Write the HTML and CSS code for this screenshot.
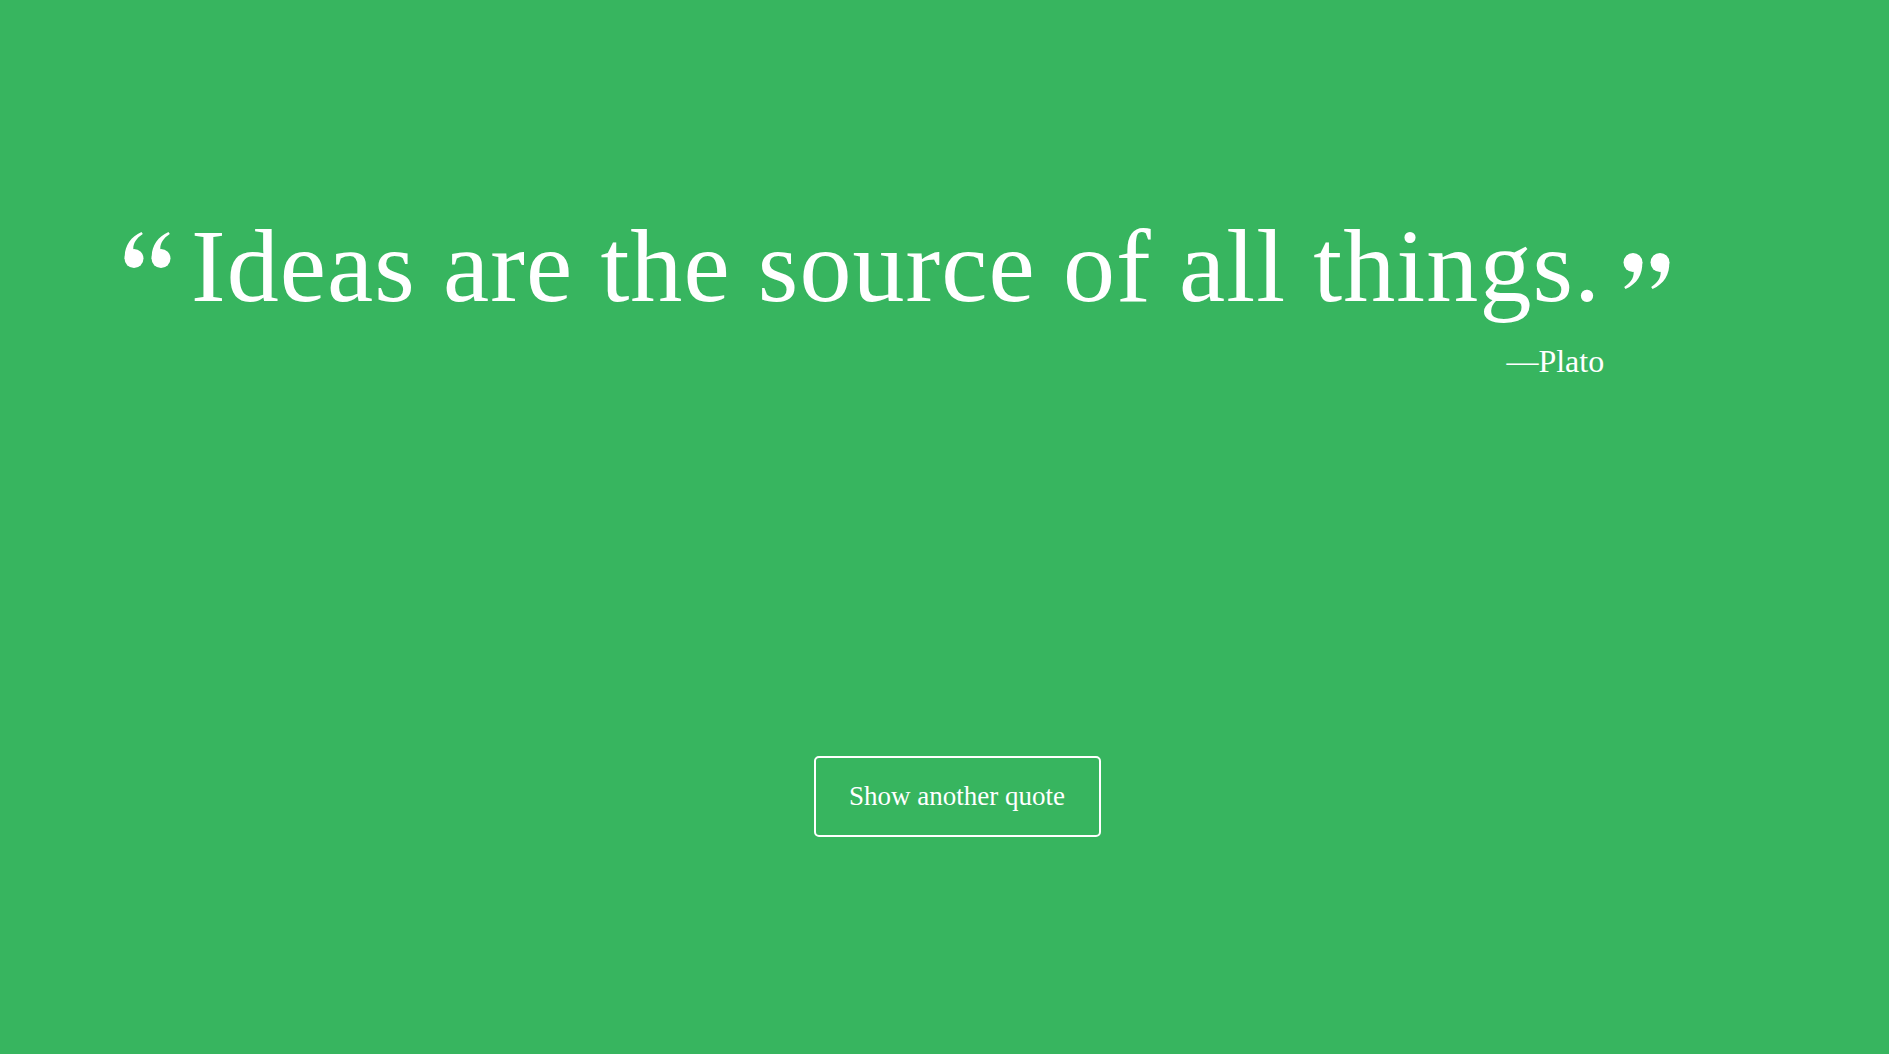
FILE: index.html
```html
<!DOCTYPE html>
<html lang="en">
<head>
<meta charset="utf-8">
<title>Random Quote Machine</title>
<link rel="stylesheet" href="styles.css">
</head>
<body>
<main class="page">
  <section class="quote-box">
    <div class="quote-row">
      <svg class="qmark qmark-open" viewBox="0 0 47 36" aria-hidden="true">
        <circle cx="10" cy="26.5" r="9.5"/>
        <path d="M0.8 27 C0 15 6 5 17.5 0 L18.8 2 C11 7 8.5 13 9.5 19 Z"/>
        <circle cx="37" cy="26.5" r="9.5"/>
        <path d="M27.8 27 C27 15 33 5 44.5 0 L45.8 2 C38 7 35.5 13 36.5 19 Z"/>
      </svg>
      <p class="quote-text">Ideas are the source of all things.</p>
      <svg class="qmark qmark-close" viewBox="0 0 47 36" aria-hidden="true">
        <g transform="rotate(180 23.5 18)">
          <circle cx="10" cy="26.5" r="9.5"/>
          <path d="M0.8 27 C0 15 6 5 17.5 0 L18.8 2 C11 7 8.5 13 9.5 19 Z"/>
          <circle cx="37" cy="26.5" r="9.5"/>
          <path d="M27.8 27 C27 15 33 5 44.5 0 L45.8 2 C38 7 35.5 13 36.5 19 Z"/>
        </g>
      </svg>
    </div>
    <p class="quote-author">—Plato</p>
  </section>
  <div class="actions">
    <button class="new-quote" type="button">Show another quote</button>
  </div>
</main>
</body>
</html>
```

FILE: styles.css
```css
html, body {
  margin: 0;
  padding: 0;
  height: 100%;
}

body {
  background: #37b55f;
  color: #ffffff;
  font-family: "Liberation Serif", "Times New Roman", serif;
}

.page {
  min-height: 100%;
  display: flex;
  flex-direction: column;
  padding-top: 203px;
  box-sizing: border-box;
}

.quote-box {
  align-self: flex-start;
  margin-left: 124px;
  display: flex;
  flex-direction: column;
}

.quote-row {
  display: flex;
  align-items: flex-start;
}

.qmark {
  width: 47px;
  height: 36px;
  fill: #ffffff;
  flex: none;
}

.qmark-open {
  margin-top: 29px;
  margin-right: 20px;
}

.qmark-close {
  margin-top: 50px;
  margin-left: 22px;
}

.quote-text {
  margin: 0;
  font-size: 104px;
  line-height: 125px;
  font-weight: 400;
  letter-spacing: 1.1px;
  white-space: nowrap;
}

.quote-author {
  margin: 14px 0 0;
  padding-right: 66px;
  text-align: right;
  font-size: 32px;
  line-height: 38px;
}

.actions {
  display: flex;
  justify-content: center;
  padding-left: 25px;
  margin-top: 376px;
}

.new-quote {
  width: 287px;
  height: 81px;
  box-sizing: border-box;
  border: 2px solid #ffffff;
  border-radius: 5px;
  background: transparent;
  color: #ffffff;
  font-family: "Liberation Serif", "Times New Roman", serif;
  font-size: 27px;
  cursor: pointer;
  display: flex;
  align-items: center;
  justify-content: center;
  padding: 0;
}
```
